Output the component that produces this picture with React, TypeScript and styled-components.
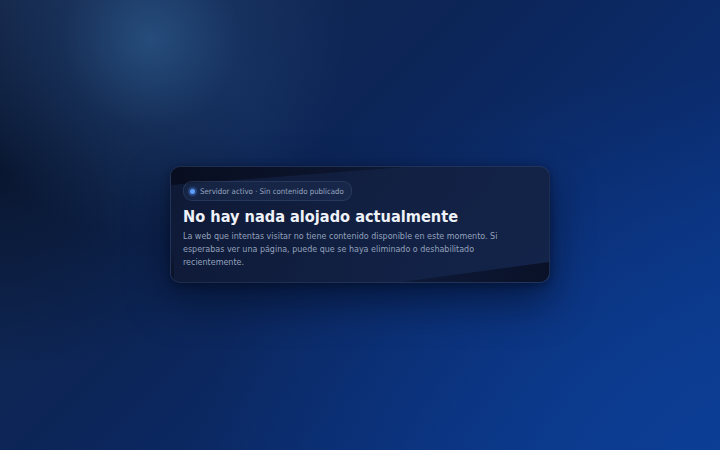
import styled, { createGlobalStyle } from "styled-components";

const GlobalStyle = createGlobalStyle`
  html, body {
    margin: 0;
    padding: 0;
    height: 100%;
  }
  body {
    font-family: "DejaVu Sans Condensed", "DejaVu Sans", "Liberation Sans", sans-serif;
    font-stretch: condensed;
  }
  #root {
    height: 100%;
  }
`;

const Page = styled.main`
  width: 100%;
  height: 100vh;
  display: flex;
  align-items: center;
  justify-content: center;
  overflow: hidden;
  background:
    radial-gradient(circle at 150px 40px, rgba(45, 90, 140, 0.75) 0, rgba(35, 70, 120, 0.35) 90px, rgba(20, 40, 80, 0) 200px),
    radial-gradient(ellipse 260px 200px at 0px 170px, rgba(5, 15, 35, 0.7) 0, rgba(5, 15, 35, 0) 100%),
    radial-gradient(ellipse 520px 380px at 720px 450px, rgba(12, 62, 150, 0.9) 0, rgba(12, 62, 150, 0) 100%),
    linear-gradient(135deg, #16284a 0%, #0c2557 40%, #0b2c6e 70%, #0b3a8e 100%);
`;

const Card = styled.section`
  position: relative;
  width: 380px;
  height: 117px;
  box-sizing: border-box;
  padding: 14px 12px 0 12px;
  border-radius: 10px;
  overflow: hidden;
  background: linear-gradient(110deg, rgba(15, 25, 52, 0.94) 0%, rgba(19, 32, 64, 0.92) 55%, rgba(20, 34, 68, 0.9) 100%);
  border: 1px solid rgba(110, 140, 200, 0.16);
  box-shadow: 0 18px 40px rgba(2, 8, 24, 0.55), 0 2px 8px rgba(2, 8, 24, 0.4);
  margin-top: -1px;

  /* dark sliver along the top left, as if the inner panel were tilted */
  &::before {
    content: "";
    position: absolute;
    left: 0;
    top: 0;
    width: 62%;
    height: 18px;
    clip-path: polygon(0 0, 100% 0, 0 100%);
    background: linear-gradient(90deg, rgba(7, 12, 28, 0.85), rgba(7, 12, 28, 0.35));
    pointer-events: none;
  }

  /* dark wedge in the bottom right corner */
  &::after {
    content: "";
    position: absolute;
    right: 0;
    bottom: 0;
    width: 39%;
    height: 20px;
    clip-path: polygon(0 100%, 100% 0, 100% 100%);
    background: linear-gradient(90deg, rgba(8, 14, 34, 0.4), rgba(8, 14, 34, 0.85));
    pointer-events: none;
  }
`;

const EdgeShade = styled.span`
  position: absolute;
  left: 0;
  top: 0;
  bottom: 0;
  width: 3px;
  background: linear-gradient(180deg, rgba(7, 12, 28, 0.7) 0, rgba(7, 12, 28, 0) 20%, rgba(7, 12, 28, 0) 72%, rgba(7, 12, 28, 0.7) 100%);
  pointer-events: none;
`;

const Content = styled.div`
  position: relative;
  z-index: 1;
  display: flex;
  flex-direction: column;
  align-items: flex-start;
`;

const Badge = styled.div`
  display: inline-flex;
  align-items: center;
  gap: 5px;
  height: 18px;
  padding: 0 7px 0 6px;
  border-radius: 9px;
  background: rgba(40, 58, 96, 0.3);
  border: 1px solid rgba(120, 150, 200, 0.16);
  font-size: 7.8px;
  color: #96a4bf;
  white-space: nowrap;
`;

const Dot = styled.span`
  width: 5px;
  height: 5px;
  border-radius: 50%;
  background: #5f9ef7;
  box-shadow: 0 0 0 2px rgba(74, 140, 240, 0.25), 0 0 5px rgba(74, 140, 240, 0.6);
`;

const Title = styled.h1`
  margin: 6px 0 0;
  font-size: 16.2px;
  font-weight: 700;
  line-height: 20px;
  color: #eef2f8;
  letter-spacing: 0;
`;

const Text = styled.p`
  margin: 3px 0 0;
  max-width: 330px;
  font-size: 8.9px;
  line-height: 13px;
  color: #93a1bb;
`;

export default function App() {
  return (
    <>
      <GlobalStyle />
      <Page>
        <Card>
          <EdgeShade />
          <Content>
            <Badge>
              <Dot />
              Servidor activo · Sin contenido publicado
            </Badge>
            <Title>No hay nada alojado actualmente</Title>
            <Text>
              La web que intentas visitar no tiene contenido disponible en este momento. Si
              esperabas ver una página, puede que se haya eliminado o deshabilitado
              recientemente.
            </Text>
          </Content>
        </Card>
      </Page>
    </>
  );
}
